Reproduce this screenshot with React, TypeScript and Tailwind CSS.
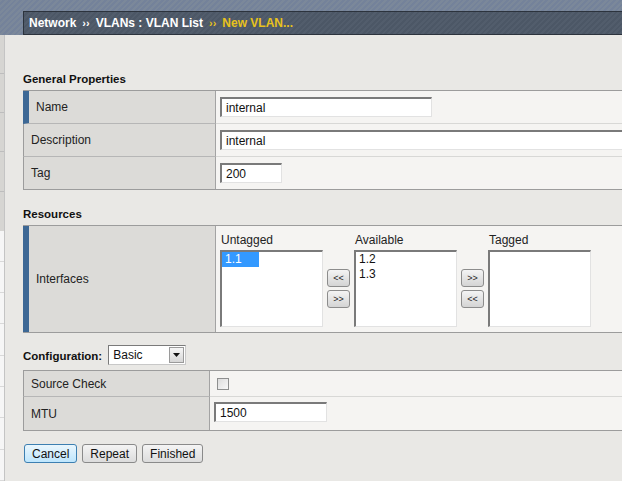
import React from "react";

// inset field look, as in the old IE-era admin UI
const inset =
  "bg-white border-t-2 border-l-2 border-r border-b border-t-[#7a7a7a] border-l-[#7a7a7a] border-r-[#e2e2e2] border-b-[#e2e2e2]";

function Field({ value, w }: { value: string; w: string }) {
  return (
    <div className={`${inset} ${w} h-[20px] flex items-center pl-[4px] text-[12px] text-[#111] whitespace-nowrap`}>
      {value}
    </div>
  );
}

function SmallBtn({ label }: { label: string }) {
  return (
    <div className="w-[23px] h-[18px] rounded-[3px] border border-[#8c8c8c] bg-gradient-to-b from-[#f4f4f4] to-[#d4d4d4] flex items-center justify-center text-[9px] leading-none text-[#222]">
      {label}
    </div>
  );
}

function ListBox({ title, items, selected }: { title: string; items: string[]; selected?: string }) {
  return (
    <div className="flex flex-col">
      <div className="h-[14px] leading-[14px] pl-[1px] text-[12px] text-[#222]">{title}</div>
      <div className={`${inset} mt-[3px] w-[103px] h-[77px] flex flex-col items-start text-[12px] leading-[15px]`}>
        {items.map((it) =>
          it === selected ? (
            <div key={it} className="w-[37px] pl-[3px] bg-[#3399ff] text-white">
              {it}
            </div>
          ) : (
            <div key={it} className="pl-[3px] text-[#111]">
              {it}
            </div>
          )
        )}
      </div>
    </div>
  );
}

function MoveButtons({ top, bottom }: { top: string; bottom: string }) {
  return (
    <div className="flex flex-col pt-[17px]">
      <div className="h-[77px] flex flex-col justify-center gap-[3px]">
        <SmallBtn label={top} />
        <SmallBtn label={bottom} />
      </div>
    </div>
  );
}

function Label({ text, bar, w, sep }: { text: string; bar?: boolean; w: string; sep?: boolean }) {
  return (
    <div
      className={`${w} shrink-0 self-stretch flex items-center pl-[7px] bg-[#dcdbd8] border-r border-r-[#a3a3a3] ${
        bar ? "border-l-[6px] border-l-[#3d6895]" : "border-l border-l-[#9c9c9c]"
      } ${sep ? "border-b border-b-[#b6b6b6]" : ""}`}
    >
      {text}
    </div>
  );
}

function Value({ children, sep }: { children?: React.ReactNode; sep?: boolean }) {
  return (
    <div className={`flex-1 self-stretch flex items-center pl-[4px] bg-[#f5f4f2] ${sep ? "border-b border-b-[#d8d8d6]" : ""}`}>
      {children}
    </div>
  );
}

function LeftStrip() {
  return (
    <div className="w-[5px] shrink-0 flex flex-col border-r border-r-[#c4c4c4]">
      <div className="h-[40px] bg-[#d6d5d2] border-b border-b-[#bdbdbd]" />
      <div className="h-[40px] bg-[#d6d5d2] border-b border-b-[#bdbdbd]" />
      <div className="h-[40px] bg-[#d6d5d2] border-b border-b-[#bdbdbd]" />
      <div className="h-[40px] bg-[#d6d5d2] border-b border-b-[#bdbdbd]" />
      <div className="h-[40px] bg-[#d6d5d2]" />
      {Array.from({ length: 8 }).map((_, i) => (
        <div key={i} className="h-[32px] bg-[#f6f6f6] border-b border-b-[#d9d9d9]" />
      ))}
    </div>
  );
}

export default function App() {
  return (
    <div className="w-[622px] h-[481px] overflow-hidden bg-[#e9e8e5] font-['Liberation_Sans',Arial,sans-serif] text-[12px] text-[#222] flex flex-col">
      {/* header band with breadcrumb */}
      <div className="h-[35px] shrink-0 pt-[11px] pl-[23px] bg-[repeating-linear-gradient(135deg,#7b889a_0px,#7b889a_2px,#74829a_2px,#74829a_4px)]">
        <div className="h-[24px] flex items-center pl-[5px] gap-[6px] whitespace-nowrap border border-r-0 border-[#2c333d] bg-[repeating-linear-gradient(135deg,#525d6c_0px,#525d6c_2px,#4c5766_2px,#4c5766_4px)] text-[12px] font-bold text-white">
          <span>Network</span>
          <span className="text-[11px]">››</span>
          <span>VLANs : VLAN List</span>
          <span className="text-[11px] text-[#e8c21c]">››</span>
          <span className="text-[#e8c21c]">New VLAN...</span>
        </div>
      </div>

      <div className="flex flex-1 min-h-0">
        <LeftStrip />
        <div className="flex-1 min-w-0 pl-[18px] flex flex-col">
          <div className="mt-[37px] h-[14px] leading-[14px] font-bold text-[11.5px] text-[#111]">General Properties</div>
          <div className="mt-[4px] border-t border-b border-[#9c9c9c] flex flex-col w-[700px]">
            <div className="h-[33px] flex">
              <Label text="Name" bar w="w-[193px]" sep />
              <Value sep>
                <Field value="internal" w="w-[212px]" />
              </Value>
            </div>
            <div className="h-[33px] flex">
              <Label text="Description" w="w-[193px]" sep />
              <Value sep>
                <Field value="internal" w="w-[440px]" />
              </Value>
            </div>
            <div className="h-[32px] flex">
              <Label text="Tag" w="w-[193px]" />
              <Value>
                <Field value="200" w="w-[62px]" />
              </Value>
            </div>
          </div>

          <div className="mt-[17px] h-[14px] leading-[14px] font-bold text-[11.5px] text-[#111]">Resources</div>
          <div className="mt-[4px] border-t border-b border-[#9c9c9c] flex w-[700px] h-[108px]">
            <Label text="Interfaces" bar w="w-[193px]" />
            <div className="flex-1 self-stretch bg-[#f5f4f2] pl-[4px] pt-[7px] flex gap-[4px] items-start">
              <ListBox title="Untagged" items={["1.1"]} selected="1.1" />
              <MoveButtons top="<<" bottom=">>" />
              <ListBox title="Available" items={["1.2", "1.3"]} />
              <MoveButtons top=">>" bottom="<<" />
              <ListBox title="Tagged" items={[]} />
            </div>
          </div>

          <div className="mt-[12px] h-[20px] flex items-center gap-[6px]">
            <span className="font-bold text-[11.5px] text-[#111] mt-[3px]">Configuration:</span>
            <div className="w-[78px] h-[20px] bg-white border border-t-[#7a7a7a] border-l-[#7a7a7a] border-r-[#c8c8c8] border-b-[#c8c8c8] flex items-center pl-[4px] pr-[1px] text-[12px] text-[#111]">
              <span className="flex-1">Basic</span>
              <div className="w-[15px] h-[16px] border border-[#9a9a9a] bg-gradient-to-b from-[#f6f6f6] to-[#d6d6d6] flex items-center justify-center">
                <svg width="7" height="4" viewBox="0 0 7 4">
                  <path d="M0 0h7L3.5 4z" fill="#111" />
                </svg>
              </div>
            </div>
          </div>

          <div className="mt-[5px] border-t border-b border-[#9c9c9c] flex flex-col w-[700px]">
            <div className="h-[26px] flex">
              <Label text="Source Check" w="w-[187px]" sep />
              <Value sep>
                <div className="ml-[3px] w-[12px] h-[12px] border border-[#8e8f8f] bg-gradient-to-br from-[#dcdcdc] to-[#f8f8f8]" />
              </Value>
            </div>
            <div className="h-[33px] flex">
              <Label text="MTU" w="w-[187px]" />
              <Value>
                <div className="-mt-[3px]">
                  <Field value="1500" w="w-[113px]" />
                </div>
              </Value>
            </div>
          </div>

          <div className="mt-[13px] flex gap-[5px] pl-[1px]">
            <button className="h-[19px] px-[7px] rounded-[3px] border border-[#3c7fb1] bg-gradient-to-b from-[#eaf6fd] to-[#bee6fd] text-[12px] leading-none text-[#111]">
              Cancel
            </button>
            <button className="h-[19px] px-[7px] rounded-[3px] border border-[#8a8a8a] bg-gradient-to-b from-[#f4f4f4] to-[#dcdcdc] text-[12px] leading-none text-[#111]">
              Repeat
            </button>
            <button className="h-[19px] px-[7px] rounded-[3px] border border-[#8a8a8a] bg-gradient-to-b from-[#f4f4f4] to-[#dcdcdc] text-[12px] leading-none text-[#111]">
              Finished
            </button>
          </div>
        </div>
      </div>
    </div>
  );
}
